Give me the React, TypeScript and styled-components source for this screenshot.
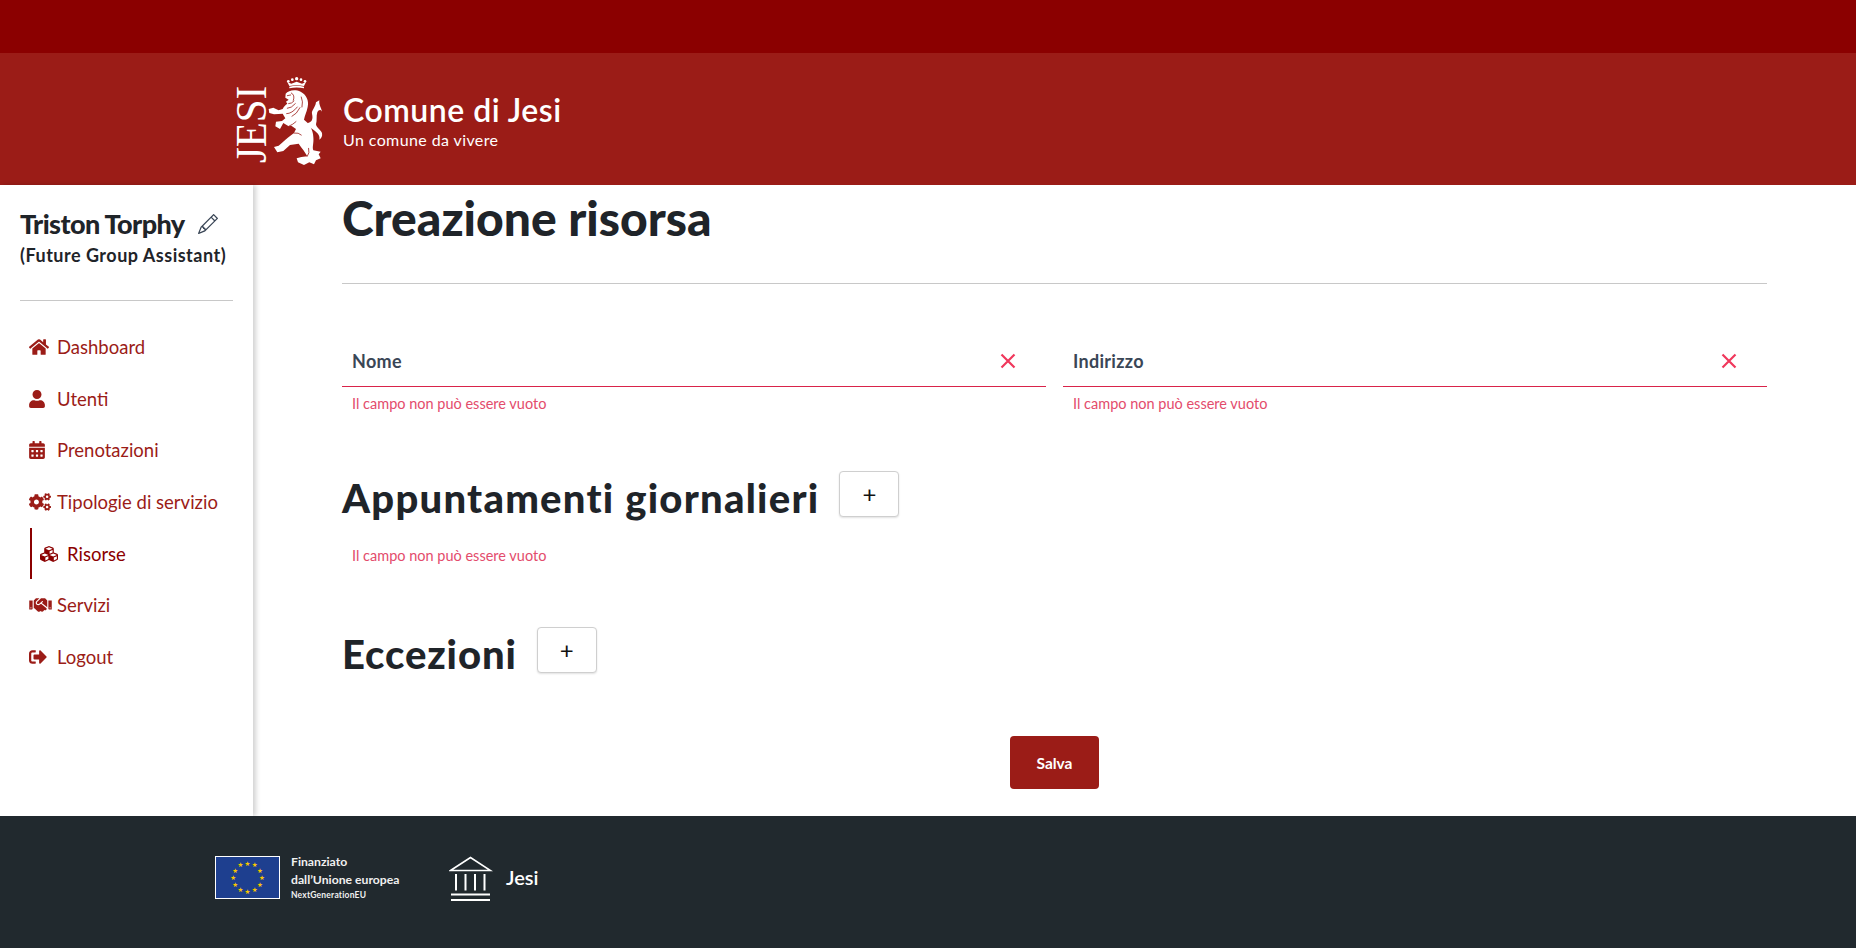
import React from 'react'
import styled, { createGlobalStyle } from 'styled-components'
import { FaHome, FaUser, FaCalendarAlt, FaCogs, FaCubes, FaHandshake, FaSignOutAlt } from 'react-icons/fa'
import { BsPencil } from 'react-icons/bs'

const GlobalStyle = createGlobalStyle`
  html, body {
    margin: 0;
    padding: 0;
    background: #fff;
    font-family: Lato, 'Open Sans', sans-serif;
    color: #1f2429;
  }
  * { box-sizing: border-box; }
`

const Page = styled.div`
  width: 1856px;
  height: 948px;
  display: flex;
  flex-direction: column;
  overflow: hidden;
`

const TopBar = styled.div`
  height: 53px;
  background: #8b0000;
`

const Header = styled.header`
  height: 132px;
  background: #9b1c17;
  display: flex;
  align-items: center;
  padding-left: 235px;
  gap: 16px;
`

const LogoSvg = styled.svg`
  flex: none;
  margin-top: 6px;
`

const Brand = styled.div`
  color: #fff;
  display: flex;
  flex-direction: column;
  padding-top: 3px;
`

const BrandTitle = styled.div`
  font-size: 32px;
  font-weight: 600;
  line-height: 38px;
  letter-spacing: 0.5px;
`

const BrandSub = styled.div`
  font-size: 16px;
  line-height: 22px;
  letter-spacing: 0.4px;
`

const Body = styled.div`
  flex: 1;
  display: flex;
  min-height: 0;
`

const Sidebar = styled.aside`
  width: 253px;
  flex: none;
  padding: 22px 20px 0;
  box-shadow: 3px 0 5px rgba(0, 0, 0, 0.18);
`

const UserName = styled.div`
  display: flex;
  align-items: center;
  gap: 13px;
  font-size: 27px;
  font-weight: 900;
  line-height: 34px;
  letter-spacing: -0.6px;
  color: #1f2429;
`

const Role = styled.div`
  font-size: 18px;
  font-weight: 700;
  line-height: 28px;
  letter-spacing: 0.5px;
  white-space: nowrap;
`

const Divider = styled.hr`
  border: 0;
  border-top: 1px solid #c8c8c8;
  margin: 31px 0 20px;
`

const Nav = styled.nav`
  display: flex;
  flex-direction: column;
`

const NavItem = styled.a<{ $active?: boolean }>`
  height: 51.7px;
  display: flex;
  align-items: center;
  font-size: 18.5px;
  font-weight: 400;
  color: ${(p) => (p.$active ? '#8b0000' : '#9b1c17')};
  margin-left: ${(p) => (p.$active ? '10px' : '9px')};
  padding-left: ${(p) => (p.$active ? '7px' : '0')};
  border-left: ${(p) => (p.$active ? '2px solid #8b0000' : '0')};
`

const IconSlot = styled.span<{ $w: number }>`
  width: 28px;
  flex: none;
  display: flex;
  align-items: center;
  font-size: 18px;
  svg { width: ${(p) => p.$w}px; flex: none; }
`

const Main = styled.main`
  flex: 1;
  min-width: 0;
  padding: 0 89px 0 89px;
  display: flex;
  flex-direction: column;
`

const PageTitle = styled.h1`
  margin: -3px 0 0;
  font-size: 48px;
  font-weight: 900;
  line-height: 72px;
`

const Rule = styled.hr`
  border: 0;
  border-top: 1px solid #c8c8c8;
  margin: 29px 0 0;
`

const Fields = styled.div`
  display: grid;
  grid-template-columns: 704px 704px;
  gap: 17px;
  margin-top: 57px;
`

const Field = styled.div`
  display: flex;
  flex-direction: column;
`

const FieldRow = styled.div`
  height: 46px;
  display: flex;
  align-items: center;
  justify-content: space-between;
  padding: 0 30px 6px 10px;
  border-bottom: 1px solid #d9234a;
  font-size: 18px;
  font-weight: 700;
  letter-spacing: 0.3px;
  color: #3a4656;
`

const ErrorText = styled.div<{ $top: number }>`
  font-size: 14.5px;
  line-height: 20px;
  margin-top: ${(p) => p.$top}px;
  padding-left: 10px;
  color: #e34c6c;
  font-weight: 400;
`

const Section = styled.div<{ $top: number }>`
  display: flex;
  align-items: center;
  gap: 20px;
  margin-top: ${(p) => p.$top}px;
`

const SectionTitle = styled.h2<{ $spacing: number }>`
  margin: 0;
  font-size: 40px;
  font-weight: 900;
  line-height: 60px;
  letter-spacing: ${(p) => p.$spacing}px;
`

const AddButton = styled.button`
  width: 60px;
  height: 46px;
  margin-top: -8px;
  background: #fff;
  border: 1px solid #cfcfcf;
  border-radius: 4px;
  box-shadow: 0 1px 2px rgba(0, 0, 0, 0.12);
  font-family: Lato, sans-serif;
  font-size: 24px;
  font-weight: 400;
  color: #111;
  line-height: 1;
`

const SaveRow = styled.div`
  display: flex;
  justify-content: center;
  margin-top: 52px;
`

const SaveButton = styled.button`
  width: 89px;
  height: 53px;
  border: 0;
  border-radius: 4px;
  background: #9b1c17;
  color: #fff;
  font-family: Lato, sans-serif;
  font-size: 15.5px;
  font-weight: 700;
`

const Footer = styled.footer`
  height: 132px;
  background: #21292e;
  display: flex;
  align-items: flex-start;
  padding: 40px 0 0 215px;
  color: #fff;
`

const FundText = styled.div`
  margin: -3px 0 0 11px;
  font-size: 12.2px;
  font-weight: 700;
  line-height: 18px;
  color: #f0f0f0;
  width: 158px;
  flex: none;
`

const FundSmall = styled.div`
  font-size: 8.5px;
  line-height: 12px;
  letter-spacing: 0.2px;
  font-weight: 700;
`

const BankWrap = styled.div`
  display: flex;
  align-items: center;
  gap: 13px;
  font-size: 20px;
  font-weight: 600;
`

const JesiLabel = styled.span`
  padding-bottom: 4px;
`

const LionLogo = () => (
  <LogoSvg width="92" height="90" viewBox="0 0 92 90" aria-hidden="true">
    <text
      transform="translate(31 86) rotate(-90)"
      fill="#fff"
      fontFamily="'Liberation Serif', serif"
      fontSize="44"
      textLength="77"
      lengthAdjust="spacingAndGlyphs"
    >
      JESI
    </text>
    <g transform="translate(-5 -4) scale(0.3333)">
      {/* crown */}
      <g fill="#fff">
        <circle cx="175" cy="25" r="4" />
        <circle cx="187" cy="20" r="4" />
        <circle cx="200" cy="17" r="5" />
        <circle cx="213" cy="20" r="4" />
        <circle cx="225" cy="25" r="4" />
        <path d="M172 27l12 5 16-6 16 6 12-5-6 12q-22-5-44 0z" />
        <path d="M178 41q22-5 44 0v5q-22-5-44 0z" />
      </g>
      {/* tail */}
      <path
        fill="#fff"
        d="M232 150C246 148 250 138 246 122C244 112 256 104 258 88L268 82C266 96 274 104 276 116C272 108 266 110 262 118C258 130 262 142 258 154C260 166 272 170 276 180C278 190 274 196 268 200C270 190 266 182 252 172C246 166 238 164 232 160Z"
      />
      {/* body */}
      <path
        fill="#fff"
        d="M167 62C175 52 195 48 212 56C228 64 238 82 233 102C230 118 224 128 222 140C236 150 250 170 250 192C252 210 246 222 250 232L272 236L266 244L272 256L258 262L252 274L238 268L222 276L204 268L200 256L214 252L232 250C226 238 216 226 206 212L180 216L160 234L142 238L132 222L146 218L158 208C168 198 178 190 192 180L198 168L184 158L176 160L160 150L150 168L136 160L138 146L156 144L166 136L158 122L132 124L118 120L116 108L130 104L146 112L158 108C162 100 166 96 172 92L168 86L176 80L166 74Z"
      />
      {/* mane and limb lines */}
      <g fill="none" stroke="#9b1c17" strokeWidth="2.4" strokeLinecap="round">
        <path d="M172 68l10-2M184 60q12 6 6 22" />
        <path d="M176 92q10 0 16-8M172 106q12 0 24-14M170 122q16 0 32-20M186 130q14-6 24-26M214 72q6 14 2 30" />
        <path d="M176 160q14-6 22-14M192 180q14-2 22 6M232 250q8-10 4-24" />
      </g>
    </g>
  </LogoSvg>
)

const XIcon = () => (
  <svg width="16" height="16" viewBox="0 0 16 16" aria-hidden="true">
    <path d="M1.5 1.5l13 13M14.5 1.5l-13 13" stroke="#f0385c" strokeWidth="2.2" fill="none" />
  </svg>
)

const EuFlag = () => {
  const stars = Array.from({ length: 12 }, (_, i) => {
    const a = (i * Math.PI) / 6
    return { x: 32.5 + Math.cos(a) * 14.3, y: 21.5 + Math.sin(a) * 14.3 }
  })
  return (
    <svg width="65" height="43" viewBox="0 0 65 43" aria-hidden="true" style={{ flex: 'none' }}>
      <rect x="0.5" y="0.5" width="64" height="42" fill="#1e3f8f" stroke="#fff" />
      {stars.map((s, i) => (
        <text key={i} x={s.x} y={s.y + 2.3} fill="#f7c600" fontSize="6.5" textAnchor="middle" fontFamily="'DejaVu Sans', sans-serif">
          ★
        </text>
      ))}
    </svg>
  )
}

const BankIcon = () => (
  <svg width="44" height="46" viewBox="0 0 44 46" aria-hidden="true">
    <g fill="none" stroke="#fff">
      <path d="M1.5 14.5L21.5 1.5l20 13z" strokeWidth="1.6" />
      <path d="M7 18v16.5M16.5 18v16.5M26 18v16.5M35.5 18v16.5" strokeWidth="2" />
      <path d="M2 38.5h39M2 44h39" strokeWidth="2" />
    </g>
  </svg>
)

export default function App() {
  return (
    <Page>
      <GlobalStyle />
      <TopBar />
      <Header>
        <LionLogo />
        <Brand>
          <BrandTitle>Comune di Jesi</BrandTitle>
          <BrandSub>Un comune da vivere</BrandSub>
        </Brand>
      </Header>
      <Body>
        <Sidebar>
          <UserName>
            Triston Torphy <BsPencil size={20} color="#3a4656" />
          </UserName>
          <Role>(Future Group Assistant)</Role>
          <Divider />
          <Nav>
            <NavItem><IconSlot $w={20}><FaHome /></IconSlot>Dashboard</NavItem>
            <NavItem><IconSlot $w={16}><FaUser /></IconSlot>Utenti</NavItem>
            <NavItem><IconSlot $w={16}><FaCalendarAlt /></IconSlot>Prenotazioni</NavItem>
            <NavItem><IconSlot $w={22}><FaCogs /></IconSlot>Tipologie di servizio</NavItem>
            <NavItem $active><IconSlot $w={20}><FaCubes /></IconSlot>Risorse</NavItem>
            <NavItem><IconSlot $w={23}><FaHandshake /></IconSlot>Servizi</NavItem>
            <NavItem><IconSlot $w={18}><FaSignOutAlt /></IconSlot>Logout</NavItem>
          </Nav>
        </Sidebar>
        <Main>
          <PageTitle>Creazione risorsa</PageTitle>
          <Rule />
          <Fields>
            <Field>
              <FieldRow>Nome <XIcon /></FieldRow>
              <ErrorText $top={7}>Il campo non può essere vuoto</ErrorText>
            </Field>
            <Field>
              <FieldRow>Indirizzo <XIcon /></FieldRow>
              <ErrorText $top={7}>Il campo non può essere vuoto</ErrorText>
            </Field>
          </Fields>
          <Section $top={54}>
            <SectionTitle $spacing={1.25}>Appuntamenti giornalieri</SectionTitle>
            <AddButton>+</AddButton>
          </Section>
          <ErrorText $top={18}>Il campo non può essere vuoto</ErrorText>
          <Section $top={58}>
            <SectionTitle $spacing={0.9}>Eccezioni</SectionTitle>
            <AddButton>+</AddButton>
          </Section>
          <SaveRow>
            <SaveButton>Salva</SaveButton>
          </SaveRow>
        </Main>
      </Body>
      <Footer>
        <EuFlag />
        <FundText>
          Finanziato
          <br />
          dall’Unione europea
          <FundSmall>NextGenerationEU</FundSmall>
        </FundText>
        <BankWrap>
          <BankIcon />
          <JesiLabel>Jesi</JesiLabel>
        </BankWrap>
      </Footer>
    </Page>
  )
}
